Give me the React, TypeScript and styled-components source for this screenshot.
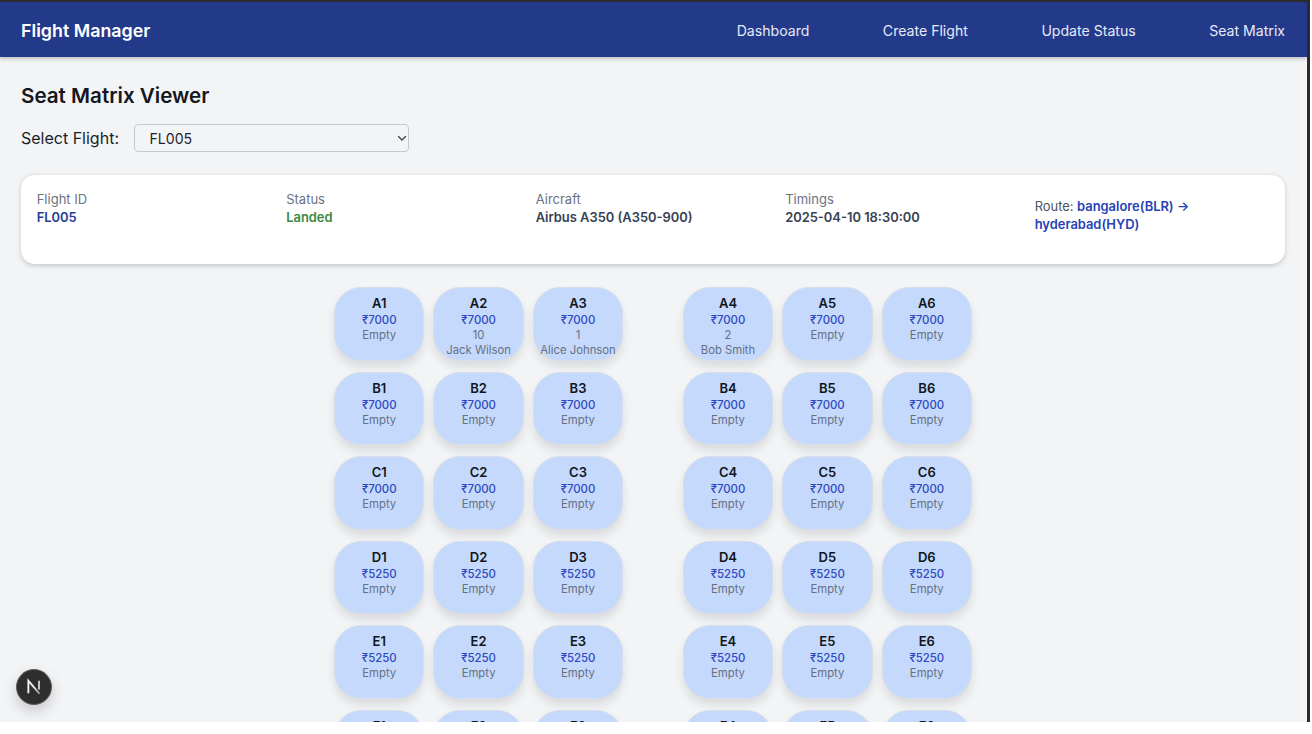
import React from "react";
import styled, { createGlobalStyle } from "styled-components";

const Global = createGlobalStyle`
  html, body { margin: 0; padding: 0; background: #fff; height: 100%; overflow: hidden; }
  body { font-family: Inter, "Liberation Sans", sans-serif; }
  * { box-sizing: border-box; }
`;

const Frame = styled.div`
  width: 1310px;
  height: 722px;
  background: #2b2b2d;
  padding: 2px 3px 0 0;
`;

const Screen = styled.div`
  position: relative;
  width: 1307px;
  height: 720px;
  overflow: hidden;
  background: #f3f4f6;
`;

const Navbar = styled.header`
  height: 55px;
  background: #233a8b;
  box-shadow: 0 1.5px 4px rgba(0, 0, 0, 0.22);
  display: flex;
  align-items: center;
  justify-content: space-between;
  padding: 1px 22px 0 21px;
`;

const Brand = styled.div`
  color: #fff;
  font-size: 17.85px;
  font-weight: 600;
`;

const NavLinks = styled.nav`
  display: flex;
  gap: 73.5px;
`;

const NavLink = styled.a`
  color: #e6eaf6;
  font-size: 14.1px;
  line-height: 21px;
`;

const Main = styled.main`
  padding: 24px 22px 0 21px;
`;

const Title = styled.h1`
  margin: 0;
  color: #131720;
  font-size: 20.6px;
  line-height: 29px;
  font-weight: 600;
`;

const SelectRow = styled.div`
  display: flex;
  align-items: center;
  gap: 15.5px;
  margin-top: 14px;
`;

const SelectLabel = styled.label`
  color: #1a1f2a;
  font-size: 16px;
  line-height: 28px;
`;

const FakeSelect = styled.div`
  width: 275px;
  height: 28px;
  border: 1.5px solid #c6c9cf;
  border-radius: 4px;
  display: flex;
  align-items: center;
  justify-content: space-between;
  padding: 0 0 0 14px;
  color: #1f2430;
  font-size: 14.1px;
  background: #f3f4f6;
`;

const InfoCard = styled.section`
  margin-top: 23px;
  height: 89px;
  background: #fff;
  border-radius: 14px;
  box-shadow: 0 1.5px 5px rgba(0, 0, 0, 0.18);
  padding: 15px 16px 15px 15.7px;
  display: grid;
  grid-template-columns: repeat(5, 249.5px);
`;

const InfoCell = styled.div`
  font-size: 13px;
  line-height: 18px;
`;

const InfoLabel = styled.div`
  color: #6b7280;
`;

const InfoValue = styled.div<{ $color: string }>`
  color: ${(p) => p.$color};
  font-weight: 600;
  font-size: 12.9px;
  line-height: 20px;
`;

const RouteCell = styled.div`
  font-size: 12.9px;
  line-height: 18.5px;
  color: #4b5563;
  padding-top: 7.5px;
  width: 190px;
`;

const RouteValue = styled.span`
  color: #2742b4;
  font-weight: 600;
`;

const SeatGrid = styled.div`
  margin-top: 23px;
  display: flex;
  flex-direction: column;
  align-items: center;
  gap: 11px;
`;

const SeatRow = styled.div`
  display: flex;
  gap: 59.5px;
`;

const SeatGroup = styled.div`
  display: flex;
  gap: 8.9px;
`;

const Seat = styled.div`
  width: 90.5px;
  height: 73.5px;
  flex: none;
  border-radius: 27px;
  background: #c4d9fb;
  border: 1px solid #d6deea;
  box-shadow: 0 6px 10px rgba(0, 0, 0, 0.1);
  display: flex;
  flex-direction: column;
  align-items: center;
  padding-top: 7px;
  white-space: nowrap;
`;

const SeatCode = styled.div`
  color: #111620;
  font-size: 13px;
  line-height: 17px;
  font-weight: 600;
`;

const SeatPrice = styled.div`
  color: #2f48c0;
  font-size: 11.4px;
  line-height: 16.2px;
  font-weight: 500;
`;

const SeatText = styled.div`
  color: #667085;
  font-size: 11.3px;
  line-height: 14.6px;
`;

const DevBadge = styled.div`
  position: absolute;
  left: 16px;
  top: 667px;
  width: 36px;
  height: 36px;
  border-radius: 50%;
  background: #2e2e2e;
  border: 1.5px solid #5c5c5c;
  box-shadow: 0 6px 14px rgba(0, 0, 0, 0.18);
  display: flex;
  align-items: center;
  justify-content: center;
`;

type Occupant = { id: string; name: string };
const occupants: Record<string, Occupant> = {
  A2: { id: "10", name: "Jack Wilson" },
  A3: { id: "1", name: "Alice Johnson" },
  A4: { id: "2", name: "Bob Smith" },
};

const rows = ["A", "B", "C", "D", "E", "F"];
const priceFor = (row: string) => (row < "D" ? 7000 : 5250);

function SeatCard({ code, price }: { code: string; price: number }) {
  const occ = occupants[code];
  return (
    <Seat>
      <SeatCode>{code}</SeatCode>
      <SeatPrice>₹{price}</SeatPrice>
      {occ ? (
        <>
          <SeatText>{occ.id}</SeatText>
          <SeatText>{occ.name}</SeatText>
        </>
      ) : (
        <SeatText>Empty</SeatText>
      )}
    </Seat>
  );
}

export default function App() {
  return (
    <Frame>
      <Global />
      <Screen>
        <Navbar>
          <Brand>Flight Manager</Brand>
          <NavLinks>
            <NavLink>Dashboard</NavLink>
            <NavLink>Create Flight</NavLink>
            <NavLink>Update Status</NavLink>
            <NavLink>Seat Matrix</NavLink>
          </NavLinks>
        </Navbar>
        <Main>
          <Title>Seat Matrix Viewer</Title>
          <SelectRow>
            <SelectLabel>Select Flight:</SelectLabel>
            <FakeSelect>
              FL005
              <svg width="12" height="12" viewBox="0 0 12 12" fill="none">
                <path d="M2.5 4.5 6 8l3.5-3.5" stroke="#3a3f48" strokeWidth="1.3" strokeLinecap="round" strokeLinejoin="round" />
              </svg>
            </FakeSelect>
          </SelectRow>
          <InfoCard>
            <InfoCell>
              <InfoLabel>Flight ID</InfoLabel>
              <InfoValue $color="#263e94">FL005</InfoValue>
            </InfoCell>
            <InfoCell>
              <InfoLabel>Status</InfoLabel>
              <InfoValue $color="#39883f">Landed</InfoValue>
            </InfoCell>
            <InfoCell>
              <InfoLabel>Aircraft</InfoLabel>
              <InfoValue $color="#374151">Airbus A350 (A350-900)</InfoValue>
            </InfoCell>
            <InfoCell>
              <InfoLabel>Timings</InfoLabel>
              <InfoValue $color="#374151">2025-04-10 18:30:00</InfoValue>
            </InfoCell>
            <RouteCell>
              Route: <RouteValue>bangalore(BLR) → hyderabad(HYD)</RouteValue>
            </RouteCell>
          </InfoCard>
          <SeatGrid>
            {rows.map((row) => (
              <SeatRow key={row}>
                <SeatGroup>
                  {[1, 2, 3].map((n) => (
                    <SeatCard key={n} code={`${row}${n}`} price={priceFor(row)} />
                  ))}
                </SeatGroup>
                <SeatGroup>
                  {[4, 5, 6].map((n) => (
                    <SeatCard key={n} code={`${row}${n}`} price={priceFor(row)} />
                  ))}
                </SeatGroup>
              </SeatRow>
            ))}
          </SeatGrid>
        </Main>
        <DevBadge>
          <svg width="20" height="20" viewBox="0 0 16 16" fill="none">
            <defs>
              <linearGradient id="nfade" x1="0" y1="0" x2="1" y2="1">
                <stop offset="0.45" stopColor="#f4f4f4" />
                <stop offset="1" stopColor="#8a8a8a" />
              </linearGradient>
            </defs>
            <path d="M3.5 13V3l9 10.5" stroke="url(#nfade)" strokeWidth="1.5" />
            <path d="M12 3v7" stroke="#cfcfcf" strokeWidth="1.5" />
          </svg>
        </DevBadge>
      </Screen>
    </Frame>
  );
}
